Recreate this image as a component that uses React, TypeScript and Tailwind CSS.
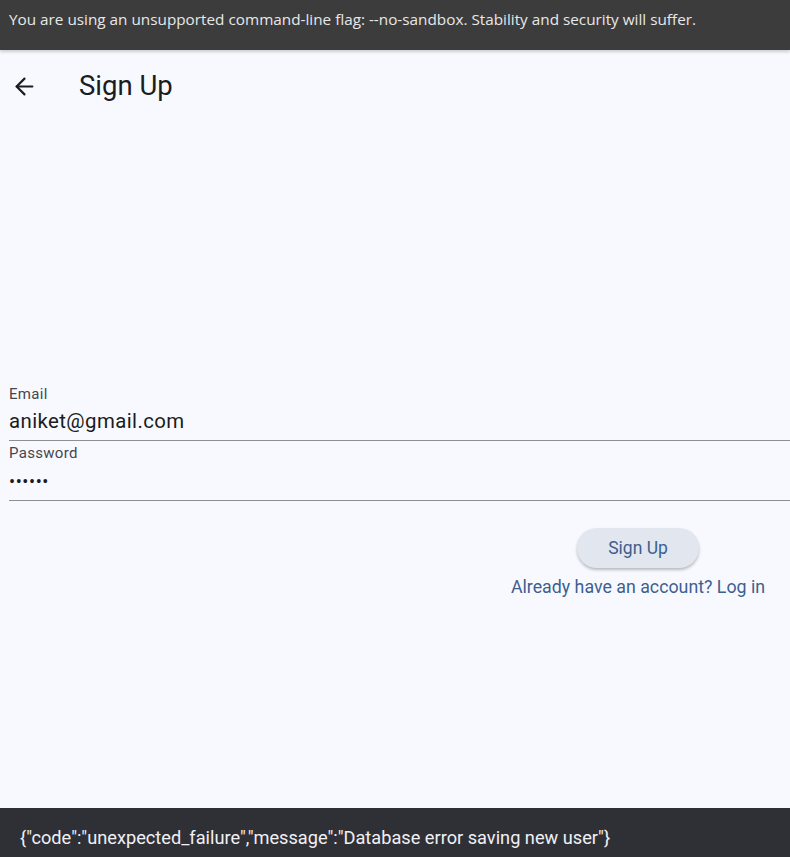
import { ArrowLeft } from "lucide-react";

export default function App() {
  return (
    <div className="relative h-[857px] w-[790px] overflow-hidden bg-[#f8f9ff] font-['Roboto',sans-serif]">
      {/* Browser warning bar */}
      <div className="relative z-10 h-[50px] bg-[#3c3c3c] pl-[9px] pt-[8px] font-['Open_Sans',sans-serif] text-[15.3px] text-[#e8e8e8] shadow-[0_2px_3px_rgba(0,0,0,0.18)]">
        You are using an unsupported command-line flag: --no-sandbox. Stability and security will suffer.
      </div>

      {/* App bar */}
      <div className="flex h-[72px] items-center">
        <div className="flex w-[48px] justify-center">
          <ArrowLeft size={27} strokeWidth={1.9} className="text-[#1b1c21]" />
        </div>
        <h1 className="ml-[31px] text-[27.5px] text-[#1b1c21]">Sign Up</h1>
      </div>

      {/* Form */}
      <div className="mt-[262px] pl-[9px]">
        <div className="border-b-[1.5px] border-[#8d8f96]">
          <div className="text-[15px] leading-[20px] tracking-[0.3px] text-[#44474e]">Email</div>
          <div className="pt-[4px] pb-[6px] text-[20.4px] leading-[26px] tracking-[0.4px] text-[#1b1c21]">aniket@gmail.com</div>
        </div>
        <div className="border-b-[1.5px] border-[#8d8f96]">
          <div className="pt-[2px] text-[15px] leading-[20px] tracking-[0.3px] text-[#44474e]">Password</div>
          <div className="pt-[6px] pb-[5px] text-[18px] leading-[26px] tracking-[0.6px] text-[#1b1c21]">••••••</div>
        </div>
      </div>

      <div className="flex flex-col items-end pr-[25px]">
        <div className="flex w-[254px] flex-col items-center">
          <button className="mt-[27px] h-[40px] w-[122px] rounded-full bg-[#e1e6ef] text-[17.5px] text-[#3d5f8f] shadow-[0_2px_3px_rgba(0,0,0,0.25)]">
            Sign Up
          </button>
          <div className="mt-[8px] whitespace-nowrap text-[17.8px] leading-[22px] text-[#3d5f8f]">
            Already have an account? Log in
          </div>
        </div>
      </div>

      {/* Snackbar */}
      <div className="absolute bottom-0 left-0 flex h-[49px] w-full items-center bg-[#2f3036] pl-[20px] pt-[10px] text-[18.2px] text-[#f0f0f5]">
        {'{"code":"unexpected_failure","message":"Database error saving new user"}'}
      </div>
    </div>
  );
}
